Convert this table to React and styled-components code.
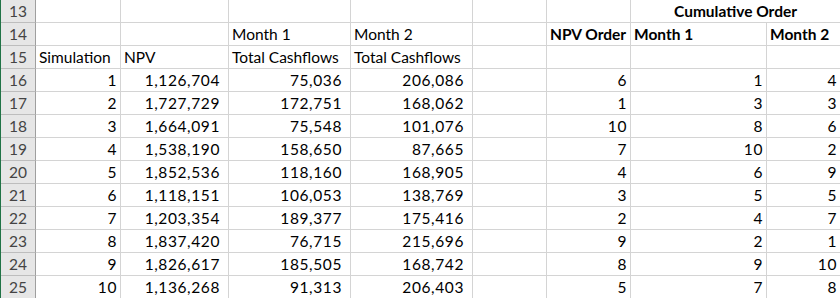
import styled, { createGlobalStyle } from 'styled-components'

const GlobalStyle = createGlobalStyle`
    body {
        margin: 0;
        background: #ffffff;
        font-family: Lato, "Liberation Sans", sans-serif;
    }
`

const columns = [36, 85, 108, 122, 122, 74, 84, 136, 74]

const rows = [
    [1, '1,126,704', '75,036', '206,086', 6, 1, 4],
    [2, '1,727,729', '172,751', '168,062', 1, 3, 3],
    [3, '1,664,091', '75,548', '101,076', 10, 8, 6],
    [4, '1,538,190', '158,650', '87,665', 7, 10, 2],
    [5, '1,852,536', '118,160', '168,905', 4, 6, 9],
    [6, '1,118,151', '106,053', '138,769', 3, 5, 5],
    [7, '1,203,354', '189,377', '175,416', 2, 4, 7],
    [8, '1,837,420', '76,715', '215,696', 9, 2, 1],
    [9, '1,826,617', '185,505', '168,742', 8, 9, 10],
    [10, '1,136,268', '91,313', '206,403', 5, 7, 8],
]

const App = () => {
    return <>
        <GlobalStyle />
        <Sheet>
            <Grid>
                <RowHead>13</RowHead>
                <Cell /><Cell /><Cell /><Cell /><Cell /><Cell />
                <Merged $bold $center>Cumulative Order</Merged>

                <RowHead>14</RowHead>
                <Cell /><Cell />
                <Cell>Month 1</Cell>
                <Cell>Month 2</Cell>
                <Cell />
                <Cell $bold>NPV Order</Cell>
                <Cell $bold>Month 1</Cell>
                <Cell $bold>Month 2</Cell>

                <RowHead>15</RowHead>
                <Cell>Simulation</Cell>
                <Cell>NPV</Cell>
                <Cell>Total Cashflows</Cell>
                <Cell>Total Cashflows</Cell>
                <Cell /><Cell /><Cell /><Cell />

                {rows.map((r, i) => [
                    <RowHead key={'h' + i}>{16 + i}</RowHead>,
                    <Cell key={'a' + i} $num>{r[0]}</Cell>,
                    <Cell key={'b' + i} $num $comma>{r[1]}</Cell>,
                    <Cell key={'c' + i} $num $comma>{r[2]}</Cell>,
                    <Cell key={'d' + i} $num $comma>{r[3]}</Cell>,
                    <Cell key={'e' + i} />,
                    <Cell key={'f' + i} $num>{r[4]}</Cell>,
                    <Cell key={'g' + i} $num>{r[5]}</Cell>,
                    <Cell key={'k' + i} $num>{r[6]}</Cell>,
                ])}
            </Grid>
        </Sheet>
    </>
}

const Sheet = styled.div`
    width: 840px;
    height: 298px;
    overflow: hidden;
    border-left: 1px solid #217346;
    box-sizing: border-box;
`

const Grid = styled.div`
    display: grid;
    grid-template-columns: ${columns.map((w, i) => (i === 0 ? w - 1 : w) + 'px').join(' ')};
    grid-auto-rows: 23px;
`

// comma-formatted numbers keep a trailing gap, like Excel's #,##0_) format
const Cell = styled.div`
    box-sizing: border-box;
    border-right: 1px solid #d4d4d4;
    border-bottom: 1px solid #d4d4d4;
    display: flex;
    align-items: flex-end;
    justify-content: ${p => (p.$num ? 'flex-end' : p.$center ? 'center' : 'flex-start')};
    padding: 0 ${p => (p.$comma ? 8 : p.$num ? 3 : 3)}px 2px 3px;
    font-size: 15.5px;
    line-height: 18px;
    letter-spacing: ${p => (p.$num ? '0.6px' : 'normal')};
    font-weight: ${p => (p.$bold ? 700 : 400)};
    color: #000000;
    white-space: nowrap;
    overflow: hidden;
`

const Merged = styled(Cell)`
    grid-column: span 2;
`

const RowHead = styled.div`
    box-sizing: border-box;
    background: #e6e6e6;
    border-right: 1px solid #9f9f9f;
    border-bottom: 1px solid #bdbdbd;
    display: flex;
    align-items: flex-end;
    justify-content: center;
    padding-bottom: 2px;
    font-size: 15.5px;
    line-height: 18px;
    color: #444444;
`

export default App
